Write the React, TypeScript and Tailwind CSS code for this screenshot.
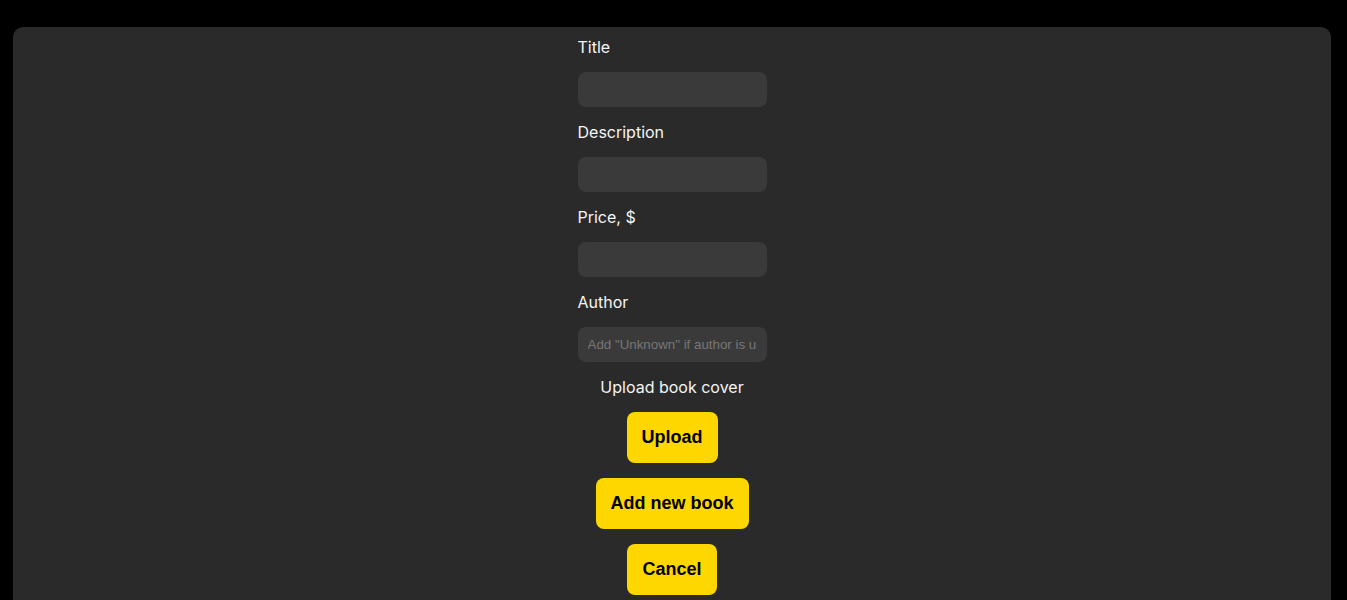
export default function App() {
	const fields = [
		{ label: "Title", placeholder: "" },
		{ label: "Description", placeholder: "" },
		{ label: "Price, $", placeholder: "" },
		{ label: "Author", placeholder: 'Add "Unknown" if author is unknown' }
	];

	return (
		<div className="min-h-screen bg-black pt-[27px] pl-[13px] pr-[16px]">
			<div className="bg-[#2a2a2a] rounded-[10px] min-h-[600px] flex flex-col items-center pt-[8px] font-['Inter',sans-serif]">
				<div className="flex flex-col w-[189px]">
					{fields.map(field => (
						<div key={field.label} className="flex flex-col">
							<label className="text-[16px] leading-[24px] text-[#f5f5f5] mb-[13px]">
								{field.label}
							</label>
							<input
								type="text"
								placeholder={field.placeholder}
								className="h-[35px] w-full rounded-[8px] bg-[#3a3a3a] px-[10px] text-[13.33px] text-white placeholder:text-[#777777] font-['Liberation_Sans',Arial,sans-serif] outline-none mb-[13px]"
							/>
						</div>
					))}
				</div>
				<p className="text-[16px] leading-[24px] text-[#f5f5f5] mb-[13px]">
					Upload book cover
				</p>
				<div className="flex flex-col items-center gap-[15px] font-['Liberation_Sans',Arial,sans-serif]">
					<button className="h-[51px] px-[15px] rounded-[8px] bg-[#ffd700] text-black font-bold text-[18px]">
						Upload
					</button>
					<button className="h-[51px] px-[15px] rounded-[8px] bg-[#ffd700] text-black font-bold text-[18px]">
						Add new book
					</button>
					<button className="h-[51px] px-[15px] rounded-[8px] bg-[#ffd700] text-black font-bold text-[18px]">
						Cancel
					</button>
				</div>
			</div>
		</div>
	);
}
